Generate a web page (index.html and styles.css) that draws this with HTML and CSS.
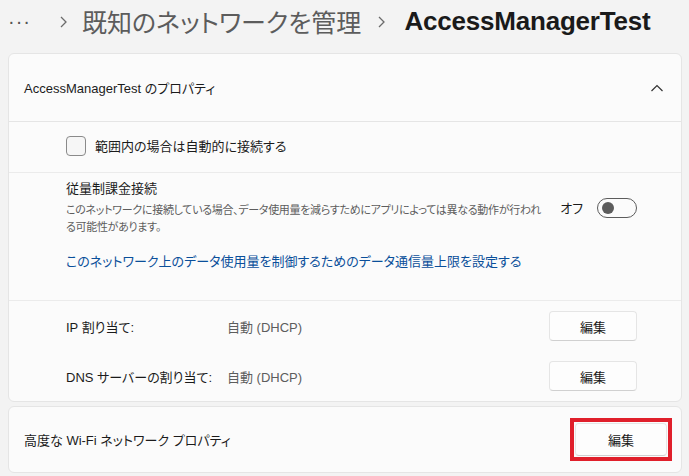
FILE: index.html
```html
<!DOCTYPE html>
<html lang="ja">
<head>
  <title>AccessManagerTest</title>
  <meta charset="utf-8">
  <link rel="stylesheet" href="styles.css">
</head>
<body>

  <!-- Breadcrumb -->
  <div class="breadcrumb">
    <span class="crumb-more">···</span>
    <svg class="crumb-sep" width="7" height="12" viewBox="0 0 7 12"><path d="M1 1l5 5-5 5" fill="none" stroke="#6b6b6b" stroke-width="1.3"/></svg>
    <span class="crumb">既知のネットワークを管理</span>
    <svg class="crumb-sep" width="7" height="12" viewBox="0 0 7 12"><path d="M1 1l5 5-5 5" fill="none" stroke="#6b6b6b" stroke-width="1.3"/></svg>
    <span class="crumb current">AccessManagerTest</span>
  </div>

  <!-- Network properties -->
  <div class="card">
    <div class="card-header">
      <span>AccessManagerTest のプロパティ</span>
      <svg width="14" height="8" viewBox="0 0 14 8"><path d="M1.5 7l5.5-5.5 5.5 5.5" fill="none" stroke="#333" stroke-width="1.2"/></svg>
    </div>

    <div class="section check-row">
      <span class="checkbox"></span>
      <span>範囲内の場合は自動的に接続する</span>
    </div>

    <div class="section metered">
      <div class="metered-row">
        <div class="metered-text">
          <div class="setting-title">従量制課金接続</div>
          <div class="setting-desc">このネットワークに接続している場合、データ使用量を減らすためにアプリによっては異なる動作が行われる可能性があります。</div>
        </div>
        <div class="toggle-wrap">
          <span class="toggle-label">オフ</span>
          <span class="toggle"><span class="knob"></span></span>
        </div>
      </div>
      <a class="link" href="#">このネットワーク上のデータ使用量を制御するためのデータ通信量上限を設定する</a>
    </div>

    <div class="section ip-rows">
      <div class="ip-row">
        <span class="ip-label">IP 割り当て:</span>
        <span class="ip-value">自動 (DHCP)</span>
        <button class="btn">編集</button>
      </div>
      <div class="ip-row">
        <span class="ip-label">DNS サーバーの割り当て:</span>
        <span class="ip-value">自動 (DHCP)</span>
        <button class="btn">編集</button>
      </div>
    </div>
  </div>

  <!-- Advanced -->
  <div class="card card-simple">
    <span>高度な Wi-Fi ネットワーク プロパティ</span>
    <span class="marked"><button class="btn btn-wide">編集</button></span>
  </div>

</body>
</html>
```

FILE: styles.css
```css
/* Page */
body {
  margin: 0;
  background-color: #f3f3f3;
  font-family: "Liberation Sans", "Noto Sans CJK JP", sans-serif;
  font-size: 13px;
  color: #1b1b1b;
  font-feature-settings: "palt";
}

/* Breadcrumb */
.breadcrumb {
  display: flex;
  align-items: center;
  height: 42px;
  padding: 0 8px;
  margin-bottom: 11px;
}

.crumb-more {
  font-size: 20px;
  letter-spacing: 1px;
  color: #555;
  margin-right: 29px;
}

.crumb-sep {
  margin-top: 2px;
}

.crumb {
  font-size: 25px;
  color: #5c5c5c;
  margin: 0 17px 0 15px;
}

.crumb.current {
  font-size: 26px;
  font-weight: bold;
  color: #1a1a1a;
  margin-left: 19px;
  letter-spacing: -0.2px;
}

/* Cards */
.card {
  background-color: #fbfbfb;
  border: 1px solid #e5e5e5;
  border-radius: 6px;
  margin: 0 7px 4px 8px;
}

.card-header {
  height: 67px;
  display: flex;
  align-items: center;
  justify-content: space-between;
  padding: 0 17px 0 15px;
  border-bottom: 1px solid #e5e5e5;
}

.section {
  padding: 0 44px 0 57px;
  border-bottom: 1px solid #ebebeb;
}

.section:last-child {
  border-bottom: none;
}

/* Checkbox row */
.check-row {
  height: 50px;
  display: flex;
  align-items: center;
}

.checkbox {
  width: 18px;
  height: 18px;
  border: 1px solid #8a8a8a;
  border-radius: 4px;
  background-color: #f6f6f6;
  margin: -3px 9px 0 0;
}

.check-row span:last-child {
  margin-top: -3px;
}

/* Metered connection */
.metered {
  height: 128px;
  padding-top: 6px;
  box-sizing: border-box;
}

.metered-row {
  display: flex;
  align-items: center;
}

.metered-text {
  width: 480px;
}

.setting-title {
  line-height: 20px;
  margin-bottom: 3px;
}

.setting-desc {
  font-size: 11px;
  line-height: 17px;
  letter-spacing: -0.3px;
  color: #5d5d5d;
}

.toggle-wrap {
  margin-left: auto;
  display: flex;
  align-items: center;
}

.toggle-label {
  margin-right: 14px;
}

.toggle {
  width: 38px;
  height: 18px;
  border: 1px solid #5c5c5c;
  border-radius: 10px;
  display: flex;
  align-items: center;
}

.knob {
  width: 12px;
  height: 12px;
  border-radius: 50%;
  background-color: #5c5c5c;
  margin-left: 4px;
}

.link {
  display: block;
  margin-top: 16px;
  line-height: 20px;
  color: #0a4f9a;
  text-decoration: none;
}

/* IP assignment rows */
.ip-row {
  height: 50px;
  display: flex;
  align-items: center;
}

.ip-label {
  width: 161px;
}

.ip-value {
  color: #5d5d5d;
}

/* Buttons */
.btn {
  margin-left: auto;
  width: 88px;
  height: 30px;
  background-color: #fdfdfd;
  border: 1px solid #e5e5e5;
  border-bottom-color: #d0d0d0;
  border-radius: 4px;
  font-family: inherit;
  font-size: 13px;
  color: #1b1b1b;
}

.btn-wide {
  display: block;
  width: 92px;
  height: 33px;
  margin: 0;
}

/* Red annotation box */
.marked {
  margin-left: auto;
  border: 4px solid #e01f2b;
  padding: 1px;
}

/* Advanced card */
.card-simple {
  height: 65px;
  display: flex;
  align-items: center;
  padding: 0 9px 0 15px;
}
```
